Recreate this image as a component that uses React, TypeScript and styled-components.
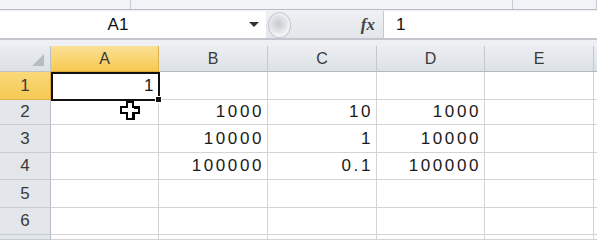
import styled, { createGlobalStyle } from "styled-components";

const GlobalStyle = createGlobalStyle`
  html, body {
    margin: 0;
    padding: 0;
    background: #ffffff;
    overflow: hidden;
  }
`;

const Window = styled.div`
  position: relative;
  width: 597px;
  height: 240px;
  overflow: hidden;
  background: #eef0f3;
  font-family: "Liberation Sans", Arial, sans-serif;
`;

const RibbonEdge = styled.div`
  display: flex;
  height: 9px;
  background: #f1f3f6;
  border-bottom: 1px solid #b8bdc5;
`;

const RibbonGroup = styled.div<{ $w?: number }>`
  width: ${(p) => (p.$w ? `${p.$w}px` : "auto")};
  flex: ${(p) => (p.$w ? "none" : "1")};
  border-right: 1px solid #c9cdd3;
`;

const FormulaBar = styled.div`
  display: flex;
  height: 27px;
  margin-top: 1px;
  background: #e8ebef;
`;

const NameBox = styled.div`
  position: relative;
  width: 266px;
  display: flex;
  align-items: center;
  justify-content: center;
  background: #ffffff;
  font-size: 17px;
  color: #111;
  padding-right: 30px;
  box-sizing: border-box;
`;

const DropArrow = styled.span`
  position: absolute;
  right: 7px;
  top: 11px;
  width: 0;
  height: 0;
  border-left: 5px solid transparent;
  border-right: 5px solid transparent;
  border-top: 5px solid #333;
`;

const Splitter = styled.div`
  width: 117px;
  display: flex;
  align-items: center;
  justify-content: space-between;
  padding: 0 8px 0 2px;
  box-sizing: border-box;
  background: linear-gradient(#eef0f3, #e3e6ea);
`;

const Knob = styled.span`
  width: 21px;
  height: 24px;
  border-radius: 50%;
  background: radial-gradient(circle at 45% 45%, #c6cacf 0, #e2e4e7 45%, #f6f7f8 70%);
  border: 1px solid #c3c7cd;
`;

const FxLabel = styled.span`
  font-family: "Liberation Serif", "Times New Roman", serif;
  font-style: italic;
  font-weight: bold;
  font-size: 17px;
  color: #444;
`;

const FormulaInput = styled.div`
  flex: 1;
  display: flex;
  align-items: center;
  padding-left: 12px;
  background: #ffffff;
  border-left: 1px solid #c4c8ce;
  font-size: 17px;
  color: #111;
`;

const Gap = styled.div`
  height: 6px;
  border-top: 2px solid #c3c7cd;
  background: #eef0f3;
`;

const Grid = styled.div`
  display: grid;
  grid-template-columns: 51px 108px 109px 109px 108px 109px 1fr;
  grid-template-rows: 26px 28px 25px 28px 27px 28px 27px 1fr;
  height: 194px;
  background: #ffffff;
`;

const Corner = styled.div`
  position: relative;
  background: linear-gradient(#e9ecf0, #dde1e6);
  border-right: 1px solid #bcc1c8;
  border-bottom: 1px solid #bcc1c8;

  &::after {
    content: "";
    position: absolute;
    right: 6px;
    bottom: 5px;
    width: 0;
    height: 0;
    border-left: 12px solid transparent;
    border-bottom: 12px solid #b7bcc3;
  }
`;

const ColHead = styled.div<{ $active?: boolean }>`
  display: flex;
  align-items: center;
  justify-content: center;
  font-size: 16px;
  color: #3a3a3a;
  background: ${(p) =>
    p.$active
      ? "linear-gradient(#fbe096, #f6c950)"
      : "linear-gradient(#eceef2, #dde1e6)"};
  border-right: 1px solid ${(p) => (p.$active ? "#e0b24a" : "#c3c8cf")};
  border-bottom: 1px solid ${(p) => (p.$active ? "#e2a93a" : "#b3b9c1")};
`;

const RowHead = styled.div<{ $active?: boolean }>`
  display: flex;
  align-items: center;
  justify-content: center;
  font-size: 17px;
  color: #3a3a3a;
  background: ${(p) =>
    p.$active ? "linear-gradient(#f9d978, #f5c955)" : "#e3e6ea"};
  border-right: 1px solid ${(p) => (p.$active ? "#e2a93a" : "#b9bec5")};
  border-bottom: 1px solid ${(p) => (p.$active ? "#e0b24a" : "#c7ccd2")};
`;

const Cell = styled.div<{ $selected?: boolean }>`
  position: relative;
  display: flex;
  align-items: center;
  justify-content: flex-end;
  padding-right: 3px;
  font-size: 17px;
  letter-spacing: 2.6px;
  color: #1a1a1a;
  border-right: 1px solid #d4d4d4;
  border-bottom: 1px solid #d4d4d4;

  ${(p) =>
    p.$selected &&
    `
    padding-right: 2px;
    &::before {
      content: "";
      position: absolute;
      left: 0;
      top: 0;
      right: -2px;
      bottom: -2px;
      border: 2px solid #111;
      z-index: 2;
    }
    &::after {
      content: "";
      position: absolute;
      right: -4px;
      bottom: -4px;
      width: 5px;
      height: 5px;
      background: #111;
      border: 1px solid #fff;
      z-index: 3;
    }
  `}
`;

const Cursor = styled.svg`
  position: absolute;
  left: 118px;
  top: 100px;
  z-index: 5;
`;

const columns = ["A", "B", "C", "D", "E", ""];

const rows: string[][] = [
  ["1", "", "", "", "", ""],
  ["", "1000", "10", "1000", "", ""],
  ["", "10000", "1", "10000", "", ""],
  ["", "100000", "0.1", "100000", "", ""],
  ["", "", "", "", "", ""],
  ["", "", "", "", "", ""],
  ["", "", "", "", "", ""],
];

const App = () => {
  return (
    <Window>
      <GlobalStyle />
      <RibbonEdge>
        <RibbonGroup $w={130} />
        <RibbonGroup $w={381} />
        <RibbonGroup />
      </RibbonEdge>
      <FormulaBar>
        <NameBox>
          A1
          <DropArrow />
        </NameBox>
        <Splitter>
          <Knob />
          <FxLabel>fx</FxLabel>
        </Splitter>
        <FormulaInput>1</FormulaInput>
      </FormulaBar>
      <Gap />
      <Grid>
        <Corner />
        {columns.map((c, i) => (
          <ColHead key={`h${i}`} $active={c === "A"}>
            {c}
          </ColHead>
        ))}
        {rows.map((row, r) => [
          <RowHead key={`r${r}`} $active={r === 0}>
            {r < 6 ? r + 1 : ""}
          </RowHead>,
          ...row.map((v, c) => (
            <Cell key={`c${r}-${c}`} $selected={r === 0 && c === 0}>
              {v}
            </Cell>
          )),
        ])}
      </Grid>
      <Cursor width="26" height="22" viewBox="0 0 26 22">
        <path
          d="M9 2h6v5h6v6h-6v6H9v-6H3V7h6z"
          fill="#fff"
          stroke="#000"
          strokeWidth="2"
          strokeLinejoin="miter"
        />
        <path d="M16 8h6M16 14v6" stroke="#000" strokeWidth="2" />
      </Cursor>
    </Window>
  );
};

export default App;
